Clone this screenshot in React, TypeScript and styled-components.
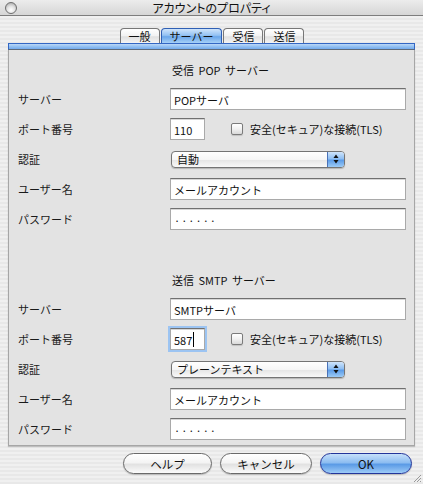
import React from "react";
import styled, { createGlobalStyle } from "styled-components";

const Global = createGlobalStyle`
  html, body { margin: 0; padding: 0; }
  body {
    font-family: "Noto Sans CJK JP", "Liberation Sans", sans-serif;
    color: #111;
  }
`;

const Window = styled.div`
  position: relative;
  width: 423px;
  height: 484px;
  display: flex;
  flex-direction: column;
  background: repeating-linear-gradient(
    to bottom,
    #f0f0f0 0px,
    #f0f0f0 2px,
    #e8e8e8 2px,
    #e8e8e8 4px
  );
  overflow: hidden;
`;

const TitleBar = styled.div`
  height: 15px;
  display: grid;
  grid-template-columns: 22px 1fr 22px;
  align-items: center;
  background: linear-gradient(to bottom, #ececec, #d6d6d6);
  border-bottom: 1px solid #7d7d7d;
`;

const CloseDot = styled.span`
  width: 10px;
  height: 10px;
  margin-left: 5px;
  border-radius: 50%;
  border: 1px solid #6e6e6e;
  background: radial-gradient(circle at 50% 70%, #ffffff 0%, #e2e2e2 45%, #9c9c9c 100%);
`;

const Title = styled.div`
  text-align: center;
  font-size: 12px;
  line-height: 15px;
  height: 15px;
  font-feature-settings: "palt";
  color: #111;
  white-space: nowrap;
`;

const Body = styled.div`
  display: flex;
  flex-direction: column;
  padding: 12px 8px 0 8px;
`;

const TabStrip = styled.div`
  display: flex;
  justify-content: center;
  gap: 1px;
  padding-left: 1px;
`;

const Tab = styled.div<{ $active?: boolean }>`
  height: 15px;
  box-sizing: border-box;
  padding: 0 8px;
  font-size: 11px;
  line-height: 14px;
  border: 1px solid ${(p) => (p.$active ? "#2f5fb4" : "#777")};
  border-bottom: none;
  border-radius: 4px 4px 0 0;
  background: ${(p) =>
    p.$active
      ? "linear-gradient(to bottom, #cfe4fb 0%, #94c2f3 45%, #6aa6ea 55%, #a6d0f7 100%)"
      : "linear-gradient(to bottom, #ffffff 0%, #f2f2f2 50%, #e0e0e0 55%, #f4f4f4 100%)"};
`;

const TabBar = styled.div`
  height: 7px;
  box-sizing: border-box;
  border: 1px solid #3367c4;
  border-bottom: 1px solid #5f6a78;
  background: linear-gradient(to bottom, #bcd8f8 0%, #94c1f2 50%, #73aaec 100%);
`;

const Panel = styled.div`
  display: flex;
  flex-direction: column;
  padding: 10px 8px 1px 9px;
  background: #e3e3e3;
  border: 1px solid #a6a6a6;
  border-top: none;
  box-shadow: 0 1px 1px rgba(0, 0, 0, 0.18);
`;

const Section = styled.div<{ $gapTop?: number }>`
  display: grid;
  grid-template-columns: 152px 236px;
  grid-template-rows: 24px repeat(5, 30px);
  margin-top: ${(p) => p.$gapTop ?? 0}px;
`;

const SectionTitle = styled.div`
  grid-column: 2;
  height: 20px;
  padding-left: 2px;
  font-size: 11px;
  line-height: 20px;
  word-spacing: 2px;
  align-self: start;
`;

const Label = styled.div`
  font-size: 11px;
  color: #1a1a1a;
  display: flex;
  align-items: center;
`;

const Cell = styled.div`
  display: flex;
  align-items: center;
`;

const Field = styled.div<{ $width?: number; $focus?: boolean }>`
  width: ${(p) => p.$width ?? 236}px;
  height: 22px;
  box-sizing: border-box;
  display: flex;
  align-items: center;
  padding: 1px 3px 0;
  font-size: 11px;
  background: #fff;
  border: 1px solid #a9a9a9;
  border-top-color: #707070;
  box-shadow: ${(p) =>
    p.$focus
      ? "0 0 0 2px #9cc4f2, inset 0 1px 0 #d6d6d6"
      : "inset 0 1px 0 #d6d6d6"};
`;

const Dots = styled.span`
  letter-spacing: 1px;
  font-size: 11px;
`;

const Caret = styled.span`
  display: inline-block;
  width: 1px;
  height: 15px;
  background: #000;
  margin-left: 1px;
`;

const CheckWrap = styled.label`
  display: flex;
  align-items: center;
  margin-left: 26px;
  gap: 7px;
  font-size: 11px;
`;

const CheckBox = styled.span`
  width: 12px;
  height: 12px;
  box-sizing: border-box;
  border: 1px solid #7b7b7b;
  border-radius: 2px;
  background: linear-gradient(to bottom, #ffffff 0%, #f1f1f1 50%, #d9d9d9 100%);
  box-shadow: 0 1px 1px rgba(0, 0, 0, 0.15);
`;

const Select = styled.div`
  width: 174px;
  height: 17px;
  margin-left: 1px;
  box-sizing: border-box;
  display: flex;
  border: 1px solid #747474;
  border-radius: 4px;
  overflow: hidden;
  background: linear-gradient(to bottom, #ffffff 0%, #f6f6f6 50%, #e6e6e6 55%, #f8f8f8 100%);
  box-shadow: 0 1px 1px rgba(0, 0, 0, 0.2);
`;

const SelectText = styled.span`
  flex: 1;
  padding-left: 5px;
  font-size: 11px;
  line-height: 15px;
`;

const SelectArrows = styled.span`
  width: 16px;
  display: flex;
  align-items: center;
  justify-content: center;
  border-left: 1px solid #4a72b8;
  background: linear-gradient(to bottom, #cfe4fb 0%, #8fbff3 45%, #5c9ce8 55%, #9ccbf6 100%);
`;

const ButtonRow = styled.div`
  display: flex;
  justify-content: flex-end;
  gap: 8px;
  padding: 7px 11px 0 0;
`;

const Button = styled.button<{ $width: number; $default?: boolean }>`
  width: ${(p) => p.$width}px;
  height: 21px;
  padding: 0;
  border-radius: 11px;
  font-family: inherit;
  font-size: 11.5px;
  color: #111;
  border: 1px solid ${(p) => (p.$default ? "#23359a" : "#6a6a6a")};
  background: ${(p) =>
    p.$default
      ? "linear-gradient(to bottom, #c6e0fa 0%, #8dbdf1 45%, #5b9be6 55%, #9dcbf7 100%)"
      : "linear-gradient(to bottom, #ffffff 0%, #f4f4f4 45%, #e2e2e2 55%, #fbfbfb 100%)"};
  box-shadow: 0 1px 1px rgba(0, 0, 0, 0.2);
`;

const Grip = styled.svg`
  position: absolute;
  right: 1px;
  bottom: 1px;
`;

function UpDown() {
  return (
    <svg width="6" height="10" viewBox="0 0 6 10">
      <path d="M3 0.5 L5.5 4 L0.5 4 Z" fill="#111" />
      <path d="M3 9.5 L5.5 6 L0.5 6 Z" fill="#111" />
    </svg>
  );
}

type ServerBlock = {
  title: string;
  server: string;
  port: string;
  focus?: boolean;
  auth: string;
};

function ServerSection({ block, gapTop }: { block: ServerBlock; gapTop?: number }) {
  return (
    <Section $gapTop={gapTop}>
      <SectionTitle>{block.title}</SectionTitle>
      <Label>サーバー</Label>
      <Cell>
        <Field>{block.server}</Field>
      </Cell>
      <Label>ポート番号</Label>
      <Cell>
        <Field $width={35} $focus={block.focus}>
          {block.port}
          {block.focus && <Caret />}
        </Field>
        <CheckWrap>
          <CheckBox />
          安全(セキュア)な接続(TLS)
        </CheckWrap>
      </Cell>
      <Label>認証</Label>
      <Cell>
        <Select>
          <SelectText>{block.auth}</SelectText>
          <SelectArrows>
            <UpDown />
          </SelectArrows>
        </Select>
      </Cell>
      <Label>ユーザー名</Label>
      <Cell>
        <Field>メールアカウント</Field>
      </Cell>
      <Label>パスワード</Label>
      <Cell>
        <Field>
          <Dots>······</Dots>
        </Field>
      </Cell>
    </Section>
  );
}

const blocks: ServerBlock[] = [
  { title: "受信 POP サーバー", server: "POPサーバ", port: "110", auth: "自動" },
  {
    title: "送信 SMTP サーバー",
    server: "SMTPサーバ",
    port: "587",
    focus: true,
    auth: "プレーンテキスト",
  },
];

export default function App() {
  return (
    <>
      <Global />
      <Window>
        <TitleBar>
          <CloseDot />
          <Title>アカウントのプロパティ</Title>
          <span />
        </TitleBar>
        <Body>
          <TabStrip>
            <Tab>一般</Tab>
            <Tab $active>サーバー</Tab>
            <Tab>受信</Tab>
            <Tab>送信</Tab>
          </TabStrip>
          <TabBar />
          <Panel>
            <ServerSection block={blocks[0]} />
            <ServerSection block={blocks[1]} gapTop={36} />
          </Panel>
        </Body>
        <ButtonRow>
          <Button $width={89}>ヘルプ</Button>
          <Button $width={92}>キャンセル</Button>
          <Button $width={92} $default>
            OK
          </Button>
        </ButtonRow>
        <Grip width="9" height="9" viewBox="0 0 9 9">
          <path d="M8 1 L1 8 M8 4 L4 8 M8 7 L7 8" stroke="#9a9a9a" strokeWidth="1" />
        </Grip>
      </Window>
    </>
  );
}
